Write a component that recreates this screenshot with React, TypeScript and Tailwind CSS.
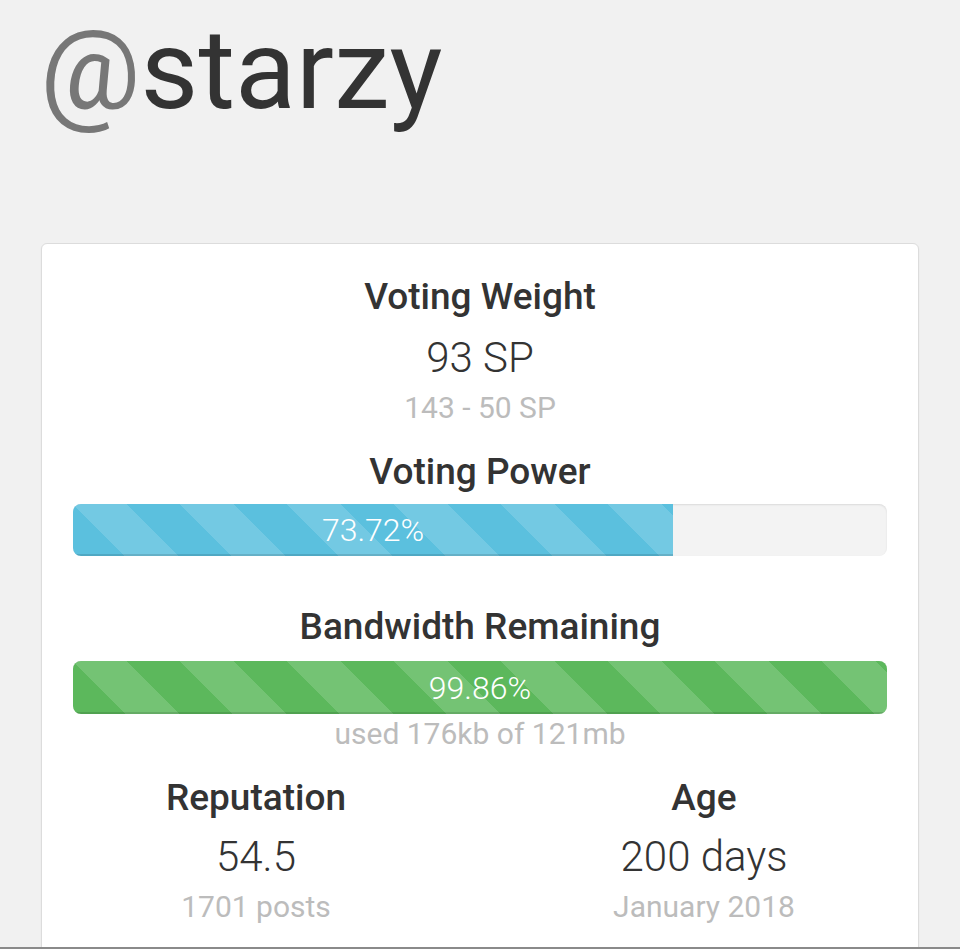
import React from "react";

const stripes =
  "bg-[linear-gradient(45deg,rgba(255,255,255,.15)_25%,transparent_25%,transparent_50%,rgba(255,255,255,.15)_50%,rgba(255,255,255,.15)_75%,transparent_75%,transparent)] bg-[length:107px_107px]";

function Bar({ pct, color, label, h }: { pct: number; color: string; label: string; h: string }) {
  return (
    <div className={`mx-[31px] ${h} rounded-[8px] bg-[#f3f3f3] shadow-[inset_0_1px_2px_rgba(0,0,0,0.1)] overflow-hidden flex`}>
      <div
        className={`${color} ${stripes} h-full flex items-center justify-center text-white text-[32px] font-light shadow-[inset_0_-2px_0_rgba(0,0,0,0.12)]`}
        style={{ width: `${pct}%` }}
      >
        {label}
      </div>
    </div>
  );
}

export default function App() {
  return (
    <div
      className="h-[949px] overflow-hidden bg-[#f1f1f1] border-b-2 border-[#8a8a8a] flex flex-col"
      style={{ fontFamily: "Roboto, 'Noto Sans', sans-serif" }}
    >
      <div className="ml-[40px] mt-[14px] h-[108px] text-[112px] leading-none">
        <span className="text-[#777777]">@</span>
        <span className="text-[#333333]">starzy</span>
      </div>
      <div className="mx-[46px] mt-[63px] h-[2px] bg-[#e6e6e6] w-[872px]" />
      <div className="ml-[41px] mt-[58px] w-[878px] h-[760px] shrink-0 bg-white border border-[#dcdcdc] rounded-[6px] shadow-[0_1px_2px_rgba(0,0,0,0.05)] flex flex-col text-center text-[#333333]">
        <div className="mt-[29px] h-[48px] leading-[48px] text-[37px] font-medium">Voting Weight</div>
        <div className="mt-[12px] h-[50px] leading-[50px] text-[42px] font-light">93 SP</div>
        <div className="h-[50px] leading-[50px] text-[30px] text-[#bcbcbc]">143 - 50 SP</div>
        <div className="mt-[15px] h-[48px] leading-[48px] text-[37px] font-medium">Voting Power</div>
        <div className="mt-[8px]">
          <Bar pct={73.72} color="bg-[#5bc0de]" label="73.72%" h="h-[52px]" />
        </div>
        <div className="mt-[47px] h-[48px] leading-[48px] text-[37px] font-medium">Bandwidth Remaining</div>
        <div className="mt-[10px]">
          <Bar pct={100} color="bg-[#5cb85c]" label="99.86%" h="h-[53px]" />
        </div>
        <div className="h-[40px] leading-[40px] text-[30px] text-[#bcbcbc]">used 176kb of 121mb</div>
        <div className="mt-[20px] flex justify-center gap-[148px]">
          <div className="w-[300px] flex flex-col">
            <div className="h-[48px] leading-[48px] text-[37px] font-medium">Reputation</div>
            <div className="mt-[10px] h-[50px] leading-[50px] text-[42px] font-light">54.5</div>
            <div className="h-[50px] leading-[50px] text-[30px] text-[#bcbcbc]">1701 posts</div>
          </div>
          <div className="w-[300px] flex flex-col">
            <div className="h-[48px] leading-[48px] text-[37px] font-medium">Age</div>
            <div className="mt-[10px] h-[50px] leading-[50px] text-[42px] font-light">200 days</div>
            <div className="h-[50px] leading-[50px] text-[30px] text-[#bcbcbc]">January 2018</div>
          </div>
        </div>
      </div>
    </div>
  );
}
